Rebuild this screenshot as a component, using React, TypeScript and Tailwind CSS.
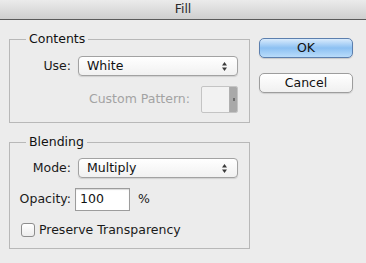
const FONT = { fontFamily: '"DejaVu Sans", "Liberation Sans", Arial, sans-serif' };

function UpDownArrows() {
  return (
    <svg width="7" height="11" viewBox="0 0 7 11" className="shrink-0">
      <path d="M3.5 1 L6 4.5 H1 Z" fill="#3a3a3a" />
      <path d="M3.5 10 L6 6.5 H1 Z" fill="#3a3a3a" />
    </svg>
  );
}

function PopUp({ value }: { value: string }) {
  return (
    <div className="flex h-[20px] w-[160px] items-center justify-between rounded-[4px] border border-[#a2a2a2] bg-gradient-to-b from-white to-[#f1f1f1] pl-[8px] pr-[9px] shadow-[0_1px_1px_rgba(0,0,0,0.12)]">
      <span className="text-[12.5px] leading-none text-[#111]">{value}</span>
      <UpDownArrows />
    </div>
  );
}

function Label({ children }: { children: string }) {
  return (
    <span className="w-[61px] shrink-0 text-right text-[12.5px] text-[#1a1a1a]">
      {children}
    </span>
  );
}

function Group({ title, children }: { title: string; children: React.ReactNode }) {
  return (
    <fieldset className="w-[241px] border border-[#b8b8b8] pb-[9px] pr-[11px]">
      <legend className="ml-[16px] px-[3px] text-[12.5px] leading-[16px] text-[#111]">
        {title}
      </legend>
      {children}
    </fieldset>
  );
}

export default function App() {
  return (
    <div className="h-[263px] w-[366px] overflow-hidden bg-[#ececec]" style={FONT}>
      {/* title bar */}
      <div className="flex h-[20px] items-center justify-center border-b border-[#5a5a5a] bg-gradient-to-b from-[#ebebeb] to-[#cfcfcf]">
        <span className="text-[12.5px] leading-none text-[#2b2b2b]">Fill</span>
      </div>

      <div className="flex">
        {/* left column */}
        <div className="ml-[9px] flex flex-col pt-[11px]">
          <Group title="Contents">
            <div className="mt-[9px] flex items-center">
              <Label>Use:</Label>
              <div className="ml-[7px]">
                <PopUp value="White" />
              </div>
            </div>
            <div className="mt-[10px] flex items-center justify-end">
              <span className="text-[12.5px] text-[#a3a3a3]">Custom Pattern:</span>
              <div className="ml-[11px] flex h-[27px] w-[37px] overflow-hidden rounded-[2px] border border-[#c4c4c4] bg-[#f2f2f2]">
                <div className="flex-1" />
                <div className="flex w-[8px] items-center justify-center border-l border-[#b0b0b0] bg-[#a9a9a9]">
                  <div className="h-[3px] w-[2px] bg-[#6d6d6d]" />
                </div>
              </div>
            </div>
          </Group>

          <div className="mt-[11px]">
            <Group title="Blending">
              <div className="mt-[8px] flex items-center">
                <Label>Mode:</Label>
                <div className="ml-[7px]">
                  <PopUp value="Multiply" />
                </div>
              </div>
              <div className="mt-[10px] flex items-center">
                <Label>Opacity:</Label>
                <div className="ml-[4px] flex h-[23px] w-[55px] items-center border border-[#9c9c9c] bg-white pl-[4px] shadow-[inset_0_1px_1px_rgba(0,0,0,0.15)]">
                  <span className="text-[12.5px] leading-none text-[#111]">100</span>
                </div>
                <span className="ml-[8px] text-[12.5px] text-[#1a1a1a]">%</span>
              </div>
              <div className="mt-[10px] flex items-center pl-[11px]">
                <div className="h-[14px] w-[14px] rounded-[3px] border border-[#8d8d8d] bg-gradient-to-b from-white to-[#ececec]" />
                <span className="ml-[4px] text-[12.5px] leading-[18px] text-[#1a1a1a]">
                  Preserve Transparency
                </span>
              </div>
            </Group>
          </div>
        </div>

        {/* right column */}
        <div className="ml-[9px] flex flex-col pt-[18px]">
          <button className="flex h-[20px] w-[94px] items-center justify-center rounded-[5px] border border-[#5c7fae] bg-gradient-to-b from-[#d9ebfc] via-[#8cc0f2] to-[#b9dcfa] text-[12.5px] leading-none text-[#111] shadow-[0_1px_1px_rgba(0,0,0,0.15)]">
            OK
          </button>
          <button className="mt-[15px] flex h-[20px] w-[94px] items-center justify-center rounded-[5px] border border-[#9d9d9d] bg-gradient-to-b from-white to-[#f0f0f0] text-[12.5px] leading-none text-[#111] shadow-[0_1px_1px_rgba(0,0,0,0.12)]">
            Cancel
          </button>
        </div>
      </div>
    </div>
  );
}
